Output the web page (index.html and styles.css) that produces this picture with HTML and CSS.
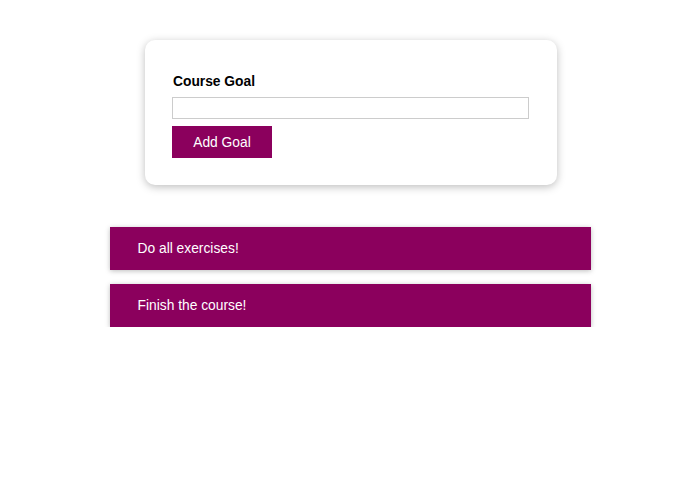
FILE: index.html
```html
<!DOCTYPE html>
<html lang="en">
<head>
<meta charset="utf-8">
<title>Course Goals</title>
<link rel="stylesheet" href="styles.css">
</head>
<body>
<section class="goal-form">
  <form>
    <div class="form-control">
      <label for="goal">Course Goal</label>
      <input id="goal" type="text">
    </div>
    <button type="button" class="button">Add Goal</button>
  </form>
</section>
<section class="goals">
  <ul class="goal-list">
    <li class="goal-item">Do all exercises!</li>
    <li class="goal-item">Finish the course!</li>
  </ul>
</section>
</body>
</html>
```
FILE: styles.css
```css
* { box-sizing: border-box; }
body {
  margin: 0;
  font-family: "Liberation Sans", Arial, sans-serif;
  background: #ffffff;
}
.goal-form {
  width: 412px;
  margin: 40px 0 0 calc(50% - 205px);
  padding: 27px 28px 27px 27px;
  border-radius: 10px;
  box-shadow: 0 2px 8px rgba(0, 0, 0, 0.26);
  background: #fff;
}
.form-control {
  margin: 6px 0 7px;
}
.form-control label {
  display: block;
  font-weight: bold;
  font-size: 13.8px;
  line-height: 18px;
  color: #000;
  margin-bottom: 6px;
  padding-left: 1px;
}
.form-control input {
  display: block;
  width: 100%;
  height: 22px;
  border: 1px solid #ccc;
  padding: 0 4px;
  font: inherit;
  font-size: 14px;
  margin: 0;
}
.button {
  display: block;
  width: 100px;
  height: 32px;
  border: none;
  background: #8b005d;
  color: #fff;
  font-family: "Liberation Sans", Arial, sans-serif;
  font-size: 13.8px;
  padding: 0;
  cursor: pointer;
}
.goals {
  width: 481px;
  margin: 42px auto 0;
}
.goal-list {
  list-style: none;
  margin: 0;
  padding: 0;
  display: flex;
  flex-direction: column;
  gap: 14px;
}
.goal-item {
  height: 43px;
  line-height: 43px;
  padding: 0 28px;
  background: #8b005d;
  color: #fff;
  font-size: 13.8px;
  box-shadow: 0 1px 5px rgba(0, 0, 0, 0.26);
}
```
